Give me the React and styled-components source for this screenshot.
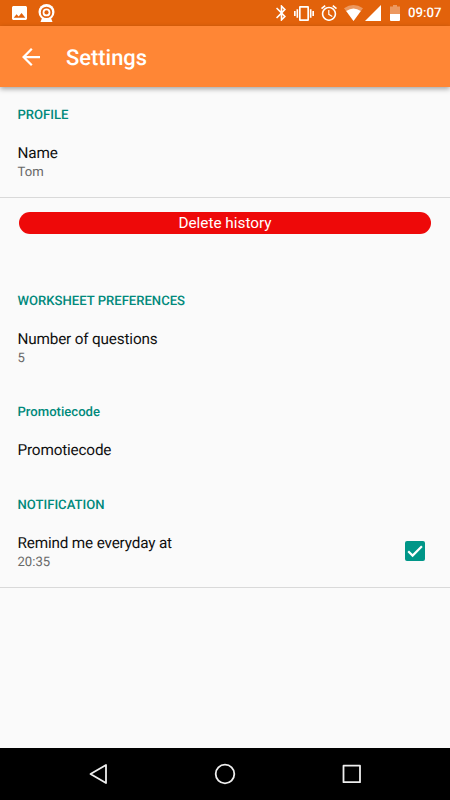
import React, { useState } from "react";
import styled, { createGlobalStyle } from "styled-components";

const App = () => {
  const [remind, setRemind] = useState(true);

  return (
    <Screen>
      <GlobalStyle />
      <StatusBar>
        <Icon width="15" height="14" box="3 3 18 18" left={12}>
          <path d="M21 19V5c0-1.1-.9-2-2-2H5c-1.1 0-2 .9-2 2v14c0 1.1.9 2 2 2h14c1.1 0 2-.9 2-2zM8.5 13.5l2.500 3.010L14.500 12l4.500 6H5l3.500-4.500z" />
        </Icon>
        <Icon width="17" height="18" box="0 0 17 18" left={10.5}>
          <path d="M4 14h9l1.500 4h-12z" />
          <circle cx="8.5" cy="8" r="8" />
          <circle cx="8.5" cy="8.4" r="4.8" fill="none" stroke="#e2620b" strokeWidth="1.8" />
          <circle cx="8.5" cy="8.4" r="2.1" fill="#e2620b" />
        </Icon>
        <Spacer />
        <Icon width="10" height="16" box="5 2 12.71 20">
          <path d="M17.710 7.710L12 2h-1v7.590L6.410 5 5 6.410 10.590 12 5 17.590 6.410 19 11 14.410V22h1l5.710-5.710-4.300-4.290 4.300-4.290zM13 5.830l1.880 1.880L13 9.590V5.830zm1.880 10.460L13 18.170v-3.760l1.880 1.880z" />
        </Icon>
        <Icon width="20" height="15" box="0 3 24 18" left={8}>
          <path d="M0 15h2V9H0v6zm3 2h2V7H3v10zm19-8v6h2V9h-2zm-3 8h2V7h-2v10zM16.500 3h-9C6.670 3 6 3.670 6 4.500v15c0 .83.67 1.500 1.500 1.500h9c.83 0 1.500-.67 1.500-1.500v-15c0-.83-.67-1.500-1.500-1.500zM16 19H8V5h8v14z" />
        </Icon>
        <Icon width="16" height="16" box="2 1.86 20 20.14" left={7}>
          <path d="M22 5.720l-4.600-3.860-1.290 1.530 4.600 3.860L22 5.720zM7.880 3.390L6.600 1.860 2 5.710l1.290 1.530 4.590-3.850zM12.500 8H11v6l4.750 2.850.75-1.230-4-2.370V8zM12 4c-4.970 0-9 4.030-9 9s4.020 9 9 9c4.970 0 9-4.030 9-9s-4.030-9-9-9zm0 16c-3.870 0-7-3.130-7-7s3.130-7 7-7 7 3.130 7 7-3.130 7-7 7z" />
        </Icon>
        <Icon width="19" height="16" box="0 0 19 16" left={7}>
          <path opacity="0.35" d="M0 3.200Q9.500-3.200 19 3.200L9.500 16z" />
          <path d="M2.200 6Q9.500 1 16.800 6L9.500 16z" />
        </Icon>
        <Icon width="16" height="16" box="0 0 16 16" left={2}>
          <path d="M0 16L16 0v16z" />
        </Icon>
        <Icon width="10" height="16" box="0 0 10 16" left={9}>
          <path opacity="0.35" d="M3 0h4v1.600h3V9H0V1.600h3z" />
          <path d="M0 9h10v6q0 1-1 1H1q-1 0-1-1z" />
        </Icon>
        <Clock>09:07</Clock>
      </StatusBar>

      <Toolbar>
        <BackButton type="button" aria-label="Back">
          <Icon width="18" height="18" box="4 4 16 16">
            <path d="M20 11H7.830l5.590-5.590L12 4l-8 8 8 8 1.410-1.410L7.830 13H20v-2z" />
          </Icon>
        </BackButton>
        <Title>Settings</Title>
      </Toolbar>

      <Content>
        <Category>PROFILE</Category>
        <Preference title="Name" summary="Tom" divider />
        <DeleteButton type="button">Delete history</DeleteButton>
        <Category>WORKSHEET PREFERENCES</Category>
        <Preference title="Number of questions" summary="5" />
        <Category>Promotiecode</Category>
        <Preference title="Promotiecode" />
        <Category>NOTIFICATION</Category>
        <Preference title="Remind me everyday at" summary="20:35" divider>
          <Checkbox
            type="button"
            role="checkbox"
            aria-label="Remind me"
            aria-checked={remind}
            $checked={remind}
            onClick={() => setRemind(!remind)}
          >
            <svg width="20" height="20" viewBox="0 0 20 20">
              <path d="M3.200 10.200L7.600 14.600L16.900 5.300" fill="none" stroke="#fff" strokeWidth="2.200" />
            </svg>
          </Checkbox>
        </Preference>
      </Content>

      <NavBar>
        <svg width="20" height="22" viewBox="0 0 20 22">
          <path d="M2.500 11L18 2v18z" />
        </svg>
        <svg width="22" height="22" viewBox="0 0 22 22">
          <circle cx="11" cy="11" r="9.3" />
        </svg>
        <svg width="20" height="22" viewBox="0 0 20 22">
          <rect x="1.5" y="2.700" width="16.5" height="16.5" />
        </svg>
      </NavBar>
    </Screen>
  );
};

const Icon = ({ width, height, box, left = 0, children }) => (
  <IconSvg
    width={width}
    height={height}
    viewBox={box}
    preserveAspectRatio="none"
    $left={left}
  >
    {children}
  </IconSvg>
);

const Preference = ({ title, summary, divider, children }) => (
  <Row $divider={divider}>
    <div>
      <RowTitle>{title}</RowTitle>
      {summary && <Summary>{summary}</Summary>}
    </div>
    {children}
  </Row>
);

const GlobalStyle = createGlobalStyle`
  * {
    box-sizing: border-box;
  }

  body {
    margin: 0;
    font-family: Roboto, sans-serif;
    text-rendering: geometricPrecision;
  }
`;

const Screen = styled.main`
  width: 450px;
  height: 800px;
  display: flex;
  flex-direction: column;
  overflow: hidden;
  background-color: #fafafa;
`;

const StatusBar = styled.header`
  height: 26px;
  display: flex;
  align-items: center;
  padding-right: 9px;
  background-color: #e2620b;
`;

const IconSvg = styled.svg`
  display: block;
  flex: none;
  margin-left: ${({ $left }) => $left}px;
  fill: #ffffff;
`;

const Spacer = styled.div`
  flex: 1;
`;

const Clock = styled.span`
  width: 33px;
  margin-left: 8px;
  padding-top: 2px;
  font-size: 13.2px;
  font-weight: 500;
  line-height: 26px;
  white-space: nowrap;
  color: #ffffff;
`;

const Toolbar = styled.div`
  height: 61px;
  flex: none;
  display: flex;
  align-items: center;
  padding: 0 22px;
  background-color: #ff8635;
  box-shadow: 0 2px 5px rgba(0, 0, 0, 0.35);
`;

const BackButton = styled.button`
  border: none;
  padding: 0;
  background: none;
`;

const Title = styled.h1`
  margin: 0 0 0 26px;
  padding-top: 4px;
  font-size: 21.9px;
  font-weight: 500;
  line-height: 26px;
  color: #ffffff;
`;

const Content = styled.section`
  flex: 1;
  display: flex;
  flex-direction: column;
`;

const Category = styled.h2`
  margin: 0;
  padding: 20px 17.5px 0;
  font-size: 13.1px;
  font-weight: 500;
  line-height: 18px;
  color: #00897b;
`;

const Row = styled.div`
  display: flex;
  justify-content: space-between;
  align-items: center;
  padding: 18px 25px ${({ $divider }) => ($divider ? 16 : 17)}px 17.5px;
  border-bottom: ${({ $divider }) => ($divider ? "1px solid #d9d9d9" : "none")};
`;

const RowTitle = styled.div`
  font-size: 15.3px;
  line-height: 20px;
  letter-spacing: -0.17px;
  color: #101010;
`;

const Summary = styled.div`
  margin-bottom: -1px;
  padding-top: 1px;
  font-size: 13.1px;
  line-height: 18px;
  color: #686868;
`;

const DeleteButton = styled.button`
  height: 22px;
  margin: 14px 19px 39px;
  border: none;
  border-radius: 11px;
  padding: 1px 0 0;
  font-family: inherit;
  font-size: 15.3px;
  line-height: 21px;
  text-align: center;
  background-color: #ee0909;
  color: #ffffff;
`;

const Checkbox = styled.button`
  width: 20px;
  height: 20px;
  margin-bottom: 3px;
  border: 2px solid ${({ $checked }) => ($checked ? "#009688" : "#757575")};
  border-radius: 2px;
  padding: 0;
  display: flex;
  align-items: center;
  justify-content: center;
  background-color: ${({ $checked }) => ($checked ? "#009688" : "transparent")};

  svg {
    flex: none;
    visibility: ${({ $checked }) => ($checked ? "visible" : "hidden")};
  }
`;

const NavBar = styled.nav`
  height: 52px;
  flex: none;
  display: flex;
  justify-content: space-between;
  align-items: center;
  padding: 0 88px;
  background-color: #000000;

  svg {
    fill: none;
    stroke: #eeeeee;
    stroke-width: 1.8;
    stroke-linejoin: round;
  }
`;

export default App;
